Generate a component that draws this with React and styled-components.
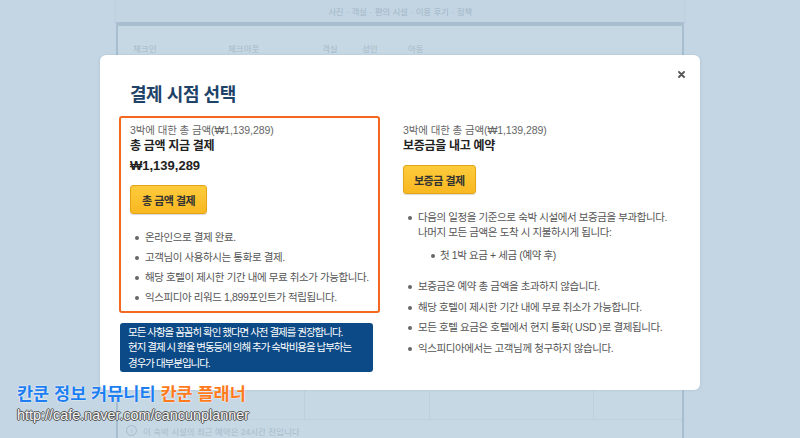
import React from "react";
import styled, { createGlobalStyle } from "styled-components";

const GlobalStyle = createGlobalStyle`
  html, body {
    margin: 0;
    padding: 0;
  }
  body {
    background: #c4d6e3;
    font-family: "Liberation Sans", "Noto Sans CJK KR", sans-serif;
    overflow: hidden;
  }
`;

const Screen = styled.div`
  position: relative;
  width: 800px;
  height: 438px;
  overflow: hidden;
  background: #c4d6e3;
`;

/* ---------- page behind the dialog ---------- */

const BackPage = styled.div`
  width: 568px;
  height: 100%;
  margin: 0 auto;
  display: flex;
  flex-direction: column;
`;

const TopNav = styled.div`
  height: 22px;
  flex-shrink: 0;
  display: flex;
  align-items: center;
  justify-content: center;
  background: #c3d5e2;
  box-shadow: 0 1px 2px rgba(110, 140, 170, 0.25);
  font-size: 8.5px;
  letter-spacing: -0.4px;
  color: #a2b6c7;
  word-spacing: 1px;
`;

const Band = styled.div`
  height: 4px;
  flex-shrink: 0;
  background: #a9bfd1;
`;

const Panel = styled.div`
  flex: 1;
  display: flex;
  flex-direction: column;
  background: #c6d8e4;
  border-left: 2px solid #a7bed0;
  border-right: 2px solid #a7bed0;
`;

const SearchLabels = styled.div`
  display: grid;
  grid-template-columns: 95px 94px 40px 46px 1fr;
  padding: 16px 0 0 15px;
  font-size: 8.5px;
  color: #a4b8c8;
`;

const Spacer = styled.div`
  flex: 1;
`;

const TableRow = styled.div`
  height: 33px;
  display: grid;
  grid-template-columns: 186px 125px 164px 1fr;
  border-bottom: 1px solid #bdd0dd;
`;

const TableCell = styled.div`
  border-left: ${(p) => (p.first ? "none" : "1px solid #bed0dd")};
`;

const InfoRow = styled.div`
  height: 15px;
  display: flex;
  align-items: center;
  gap: 6px;
  padding: 3px 0 0 8px;
  font-size: 8.5px;
  color: #a9bccb;
`;

const InfoIcon = styled.span`
  width: 9px;
  height: 9px;
  border: 1px solid #a9bccb;
  border-radius: 50%;
  display: inline-flex;
  align-items: center;
  justify-content: center;
  font-size: 7px;
`;

/* ---------- dialog ---------- */

const Modal = styled.div`
  position: absolute;
  left: 100px;
  top: 55px;
  width: 600px;
  height: 335px;
  box-sizing: border-box;
  padding: 28px 19px 0;
  background: #fff;
  border-radius: 6px;
  box-shadow: 0 0 3px rgba(90, 120, 150, 0.2);
`;

const CloseButton = styled.button`
  position: absolute;
  top: 16px;
  right: 15px;
  width: 7px;
  height: 7px;
  padding: 0;
  border: 0;
  background: none;
  display: flex;
`;

const Title = styled.h2`
  margin: 0 0 9px 11px;
  font-size: 18px;
  line-height: 24px;
  font-weight: 700;
  letter-spacing: -0.45px;
  color: #1e4268;
`;

const Columns = styled.div`
  display: grid;
  grid-template-columns: 261px 1fr;
  column-gap: 23px;
`;

const OptionBox = styled.div`
  box-sizing: border-box;
  padding: ${(p) => (p.highlight ? "5px 9px 6px" : "7px 0 0")};
  border: ${(p) => (p.highlight ? "2px solid #f4671f" : "none")};
  border-radius: 3px;
`;

const Caption = styled.div`
  font-size: 10.5px;
  line-height: 14px;
  letter-spacing: -0.1px;
  color: #666;
`;

const OptionTitle = styled.div`
  font-size: 12px;
  line-height: 18px;
  font-weight: 700;
  letter-spacing: -0.3px;
  color: #222;
`;

const Price = styled.div`
  margin-top: 2px;
  font-size: 13px;
  line-height: 18px;
  font-weight: 700;
  color: #222;
`;

const PayButton = styled.button`
  display: block;
  height: 29px;
  margin-top: 10px;
  padding: 0 ${(p) => p.padX}px;
  border: 1px solid #e3a515;
  border-radius: 3px;
  background: linear-gradient(#fdcb3c, #f8b821);
  box-shadow: 0 1px 1px rgba(0, 0, 0, 0.15);
  font-family: inherit;
  font-size: 11px;
  font-weight: 700;
  letter-spacing: -0.5px;
  color: #333;
`;

const List = styled.ul`
  list-style: none;
  margin: ${(p) => p.margin};
  padding: 0 0 0 ${(p) => p.indent}px;
`;

const Item = styled.li`
  position: relative;
  margin-bottom: ${(p) => p.gap}px;
  font-size: 10.5px;
  line-height: 15px;
  letter-spacing: -0.4px;
  color: #555;

  &:last-child {
    margin-bottom: 0;
  }

  &::before {
    content: "";
    position: absolute;
    left: ${(p) => p.dot}px;
    top: 6px;
    width: 4px;
    height: 4px;
    border-radius: 50%;
    background: #666;
  }
`;

const Notice = styled.div`
  width: 253px;
  box-sizing: border-box;
  margin: 10px 0 0 1px;
  padding: 2px 4px 1px 8px;
  border-radius: 3px;
  background: #0b4a86;
  font-size: 10.5px;
  line-height: 15.3px;
  letter-spacing: -1px;
  color: #fff;
`;

/* ---------- watermark ---------- */

const Watermark = styled.div`
  position: absolute;
  left: 17px;
  top: 384px;
`;

const Brand = styled.div`
  font-size: 17.5px;
  line-height: 21px;
  font-weight: 700;
  letter-spacing: 0;
  color: #1d7ef2;
  text-shadow: 0 0 1px #fff, 0 0 2px rgba(255, 255, 255, 0.8);
`;

const Accent = styled.span`
  color: #ff7a1c;
`;

const Url = styled.div`
  margin-top: 1px;
  font-size: 14.4px;
  line-height: 18px;
  color: #f4f4f4;
  text-shadow: -1px 0 #555, 1px 0 #555, 0 -1px #555, 0 1px #555;
`;

function CloseIcon() {
  return (
    <svg width="7" height="7" viewBox="0 0 7 7">
      <path d="M1 1L6 6M6 1L1 6" stroke="#555" strokeWidth="1.8" strokeLinecap="round" />
    </svg>
  );
}

export default function App() {
  return (
    <Screen>
      <GlobalStyle />
      <BackPage>
        <TopNav>사진 · 객실 · 편의 시설 · 이용 후기 · 정책</TopNav>
        <Band />
        <Panel>
          <SearchLabels>
            <span>체크인</span>
            <span>체크아웃</span>
            <span>객실</span>
            <span>성인</span>
            <span>아동</span>
          </SearchLabels>
          <Spacer />
          <TableRow>
            <TableCell first />
            <TableCell />
            <TableCell />
            <TableCell />
          </TableRow>
          <InfoRow>
            <InfoIcon>i</InfoIcon>
            이 숙박 시설의 최근 예약은 24시간 전입니다
          </InfoRow>
        </Panel>
      </BackPage>

      <Modal>
        <CloseButton aria-label="닫기">
          <CloseIcon />
        </CloseButton>
        <Title>결제 시점 선택</Title>
        <Columns>
          <div>
            <OptionBox highlight>
              <Caption>3박에 대한 총 금액(₩1,139,289)</Caption>
              <OptionTitle>총 금액 지금 결제</OptionTitle>
              <Price>₩1,139,289</Price>
              <PayButton padX={11}>총 금액 결제</PayButton>
              <List margin="16px 0 0" indent={15}>
                <Item gap={5} dot={-10}>온라인으로 결제 완료.</Item>
                <Item gap={5} dot={-10}>고객님이 사용하시는 통화로 결제.</Item>
                <Item gap={5} dot={-10}>해당 호텔이 제시한 기간 내에 무료 취소가 가능합니다.</Item>
                <Item gap={5} dot={-10}>익스피디아 리워드 1,899포인트가 적립됩니다.</Item>
              </List>
            </OptionBox>
            <Notice>
              모든 사항을 꼼꼼히 확인 했다면 사전 결제를 권장합니다.
              <br />
              현지 결제 시 환율 변동등에 의해 추가 숙박비용을 납부하는
              <br />
              경우가 대부분입니다.
            </Notice>
          </div>

          <OptionBox>
            <Caption>3박에 대한 총 금액(₩1,139,289)</Caption>
            <OptionTitle>보증금을 내고 예약</OptionTitle>
            <PayButton padX={10}>보증금 결제</PayButton>
            <List margin="16px 0 0" indent={15}>
              <Item gap={16} dot={-10}>
                다음의 일정을 기준으로 숙박 시설에서 보증금을 부과합니다.
                <br />
                나머지 모든 금액은 도착 시 지불하시게 됩니다:
                <List margin="8px 0 0" indent={22}>
                  <Item gap={0} dot={-9}>첫 1박 요금 + 세금 (예약 후)</Item>
                </List>
              </Item>
              <Item gap={5.5} dot={-10}>보증금은 예약 총 금액을 초과하지 않습니다.</Item>
              <Item gap={5.5} dot={-10}>해당 호텔이 제시한 기간 내에 무료 취소가 가능합니다.</Item>
              <Item gap={5.5} dot={-10}>모든 호텔 요금은 호텔에서 현지 통화( USD )로 결제됩니다.</Item>
              <Item gap={5.5} dot={-10}>익스피디아에서는 고객님께 청구하지 않습니다.</Item>
            </List>
          </OptionBox>
        </Columns>
      </Modal>

      <Watermark>
        <Brand>
          칸쿤 정보 커뮤니티 <Accent>칸쿤 플래너</Accent>
        </Brand>
        <Url>http://cafe.naver.com/cancunplanner</Url>
      </Watermark>
    </Screen>
  );
}
